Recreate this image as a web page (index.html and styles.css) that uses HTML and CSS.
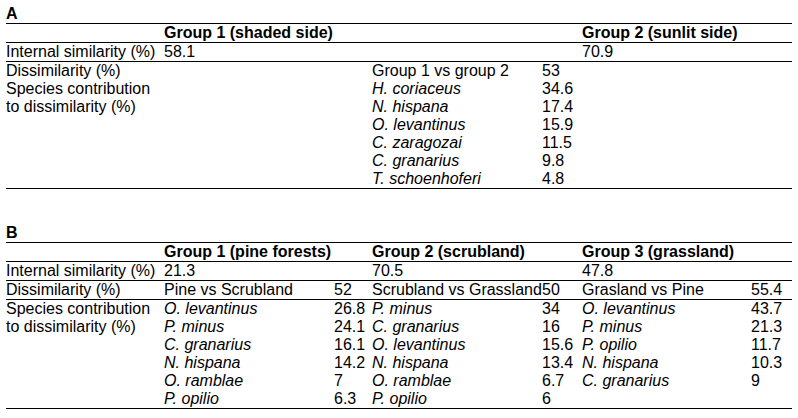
FILE: index.html
```html
<!DOCTYPE html>
<html>
<head>
<meta charset="utf-8">
<link rel="stylesheet" href="styles.css">
</head>
<body>
<div class="page">
  <div class="title title-a">A</div>
  <div class="tbl">
    <div class="row">
      <span></span><b class="span2">Group 1 (shaded side)</b><span></span><span></span><b class="span2">Group 2 (sunlit side)</b>
    </div>
    <div class="row">
      <span>Internal similarity (%)</span><span>58.1</span><span></span><span></span><span></span><span>70.9</span><span></span>
    </div>
    <div class="block">
      <div class="labels">
        <div>Dissimilarity (%)</div>
        <div>Species contribution to dissimilarity (%)</div>
      </div>
      <div class="lines">
        <div class="line"><span></span><span></span><span>Group 1 vs group 2</span><span>53</span></div>
        <div class="line"><span></span><span></span><i>H. coriaceus</i><span>34.6</span></div>
        <div class="line"><span></span><span></span><i>N. hispana</i><span>17.4</span></div>
        <div class="line"><span></span><span></span><i>O. levantinus</i><span>15.9</span></div>
        <div class="line"><span></span><span></span><i>C. zaragozai</i><span>11.5</span></div>
        <div class="line"><span></span><span></span><i>C. granarius</i><span>9.8</span></div>
        <div class="line"><span></span><span></span><i>T. schoenhoferi</i><span>4.8</span></div>
      </div>
    </div>
  </div>

  <div class="title title-b">B</div>
  <div class="tbl">
    <div class="row">
      <span></span><b class="span2">Group 1 (pine forests)</b><b class="span2">Group 2 (scrubland)</b><b class="span2">Group 3 (grassland)</b>
    </div>
    <div class="row">
      <span>Internal similarity (%)</span><span>21.3</span><span></span><span>70.5</span><span></span><span>47.8</span><span></span>
    </div>
    <div class="row">
      <span>Dissimilarity (%)</span><span>Pine vs Scrubland</span><span>52</span><span>Scrubland vs Grassland</span><span>50</span><span>Grasland vs Pine</span><span>55.4</span>
    </div>
    <div class="block">
      <div class="labels">
        <div>Species contribution to dissimilarity (%)</div>
      </div>
      <div class="lines">
        <div class="line"><i>O. levantinus</i><span>26.8</span><i>P. minus</i><span>34</span><i>O. levantinus</i><span>43.7</span></div>
        <div class="line"><i>P. minus</i><span>24.1</span><i>C. granarius</i><span>16</span><i>P. minus</i><span>21.3</span></div>
        <div class="line"><i>C. granarius</i><span>16.1</span><i>O. levantinus</i><span>15.6</span><i>P. opilio</i><span>11.7</span></div>
        <div class="line"><i>N. hispana</i><span>14.2</span><i>N. hispana</i><span>13.4</span><i>N. hispana</i><span>10.3</span></div>
        <div class="line"><i>O. ramblae</i><span>7</span><i>O. ramblae</i><span>6.7</span><i>C. granarius</i><span>9</span></div>
        <div class="line"><i>P. opilio</i><span>6.3</span><i>P. opilio</i><span>6</span><span></span><span></span></div>
      </div>
    </div>
  </div>
</div>
</body>
</html>
```

FILE: styles.css
```css
html, body {
  margin: 0;
  padding: 0;
  background: #fff;
}

body {
  font-family: "Liberation Sans", Arial, sans-serif;
  font-size: 16px;
  line-height: 18px;
  color: #000;
}

.page {
  padding: 0 6px;
  width: 786px;
}

.title {
  font-weight: bold;
  height: 18px;
}

.title-a {
  margin-top: 5px;
}

.title-b {
  margin-top: 35px;
}

.tbl {
  border-top: 1px solid #000;
  border-bottom: 1px solid #000;
  width: 786px;
}

.row {
  display: grid;
  grid-template-columns: 158px 170px 38px 170px 40px 169px 41px;
  height: 18px;
  border-bottom: 1px solid #000;
  white-space: nowrap;
}

.row b {
  font-weight: bold;
}

.span2 {
  grid-column: span 2;
}

.block {
  display: flex;
}

.labels {
  width: 158px;
  flex: none;
}

.lines {
  flex: 1;
}

.line {
  display: grid;
  grid-template-columns: 170px 38px 170px 40px 169px 41px;
  height: 18px;
  white-space: nowrap;
}

.line i {
  font-style: italic;
}
```
